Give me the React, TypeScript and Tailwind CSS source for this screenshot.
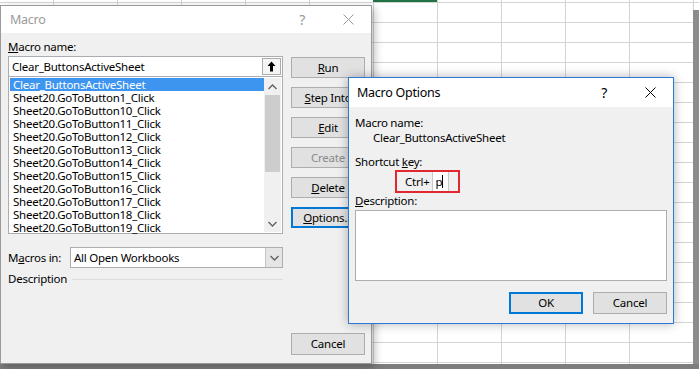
import React from 'react';

const font = { fontFamily: '"Noto Sans", "Open Sans", sans-serif' };

function CloseIcon({ color }: { color: string }) {
  return (
    <svg width="11" height="11" viewBox="0 0 11 11">
      <path d="M0.5 0.5 L10.5 10.5 M10.5 0.5 L0.5 10.5" stroke={color} strokeWidth="1" />
    </svg>
  );
}

function Chevron({ up }: { up?: boolean }) {
  return (
    <svg width="9" height="6" viewBox="0 0 9 6">
      <path d={up ? 'M0.5 5 L4.5 1 L8.5 5' : 'M0.5 1 L4.5 5 L8.5 1'} stroke="#606060" strokeWidth="1.3" fill="none" />
    </svg>
  );
}

function Btn({ children, focus, disabled, className = '' }: { children: React.ReactNode; focus?: boolean; disabled?: boolean; className?: string }) {
  return (
    <div
      className={`flex items-center justify-center bg-[#e1e1e1] ${
        focus ? 'border-2 border-[#0078d7]' : 'border border-[#adadad]'
      } ${disabled ? 'text-[#8a8a8a]' : 'text-black'} ${className}`}
    >
      {children}
    </div>
  );
}

export default function App() {
  const macros = [
    'Clear_ButtonsActiveSheet',
    'Sheet20.GoToButton1_Click',
    'Sheet20.GoToButton10_Click',
    'Sheet20.GoToButton11_Click',
    'Sheet20.GoToButton12_Click',
    'Sheet20.GoToButton13_Click',
    'Sheet20.GoToButton14_Click',
    'Sheet20.GoToButton15_Click',
    'Sheet20.GoToButton16_Click',
    'Sheet20.GoToButton17_Click',
    'Sheet20.GoToButton18_Click',
    'Sheet20.GoToButton19_Click',
  ];

  return (
    <div
      style={font}
      className="relative w-[699px] h-[369px] overflow-hidden bg-white bg-[linear-gradient(to_right,#d4d4d4_1px,transparent_1px),linear-gradient(to_bottom,#d4d4d4_1px,transparent_1px)] bg-[size:64px_20px] bg-[position:53px_2px] text-[11.5px] tracking-[-0.25px] leading-[16px] text-black"
    >
      {/* active cell edge */}
      <div className="absolute left-[373px] top-0 w-[64px] h-[2px] bg-[#217346]" />

      {/* screen frame */}
      <div className="absolute right-0 top-[10px] w-[6px] h-[359px] bg-[#8c8c8c]" />
      <div className="absolute left-0 bottom-0 w-[699px] h-[5px] bg-[#7d7d7d]" />

      {/* Macro dialog */}
      <div className="absolute left-0 top-[5px] w-[372px] h-[359px] bg-[#f0f0f0] border border-[#9a9a9a] shadow-[3px_3px_8px_rgba(0,0,0,0.25)]">
        <div className="h-[27px] bg-white flex items-center pl-[9px] pr-[17px] text-[#9a9a9a] text-[12.5px]">
          <span>Macro</span>
          <span className="ml-auto mr-[38px] text-[14px]">?</span>
          <CloseIcon color="#9a9a9a" />
        </div>

        <div className="flex items-start pl-[7px] pt-[6px]">
          {/* left column */}
          <div className="w-[275px]">
            <div>
              <u>M</u>acro name:
            </div>
            <div className="mt-[1px] h-[21px] bg-white border border-[#abadb3] flex items-center pl-[3px] pr-[1px]">
              <span>Clear_ButtonsActiveSheet</span>
              <div className="ml-auto w-[19px] h-[17px] border border-[#adadad] bg-[#f5f5f5] flex items-center justify-center">
                <svg width="9" height="11" viewBox="0 0 9 11">
                  <path d="M4.5 0.5 L8.5 5 L6 5 L6 10.5 L3 10.5 L3 5 L0.5 5 Z" fill="#000" />
                </svg>
              </div>
            </div>
            <div className="h-[157px] bg-white border border-[#abadb3] border-t-0 flex p-[1px]">
              <div className="flex-1">
                {macros.map((m, i) => (
                  <div
                    key={m}
                    className={`h-[13px] leading-[13px] pl-[3px] whitespace-nowrap ${
                      i === 0 ? 'bg-[#3d95ef] text-white' : ''
                    }`}
                  >
                    {m}
                  </div>
                ))}
              </div>
              <div className="w-[17px] bg-[#f0f0f0] flex flex-col items-center">
                <div className="h-[17px] flex items-center justify-center">
                  <Chevron up />
                </div>
                <div className="w-[15px] h-[77px] bg-[#cdcdcd]" />
                <div className="mt-auto h-[17px] flex items-center justify-center">
                  <Chevron />
                </div>
              </div>
            </div>

            <div className="mt-[13px] flex items-center">
              <span className="w-[62px]">
                M<u>a</u>cros in:
              </span>
              <div className="flex-1 h-[21px] bg-white border border-[#abadb3] flex items-center pl-[3px]">
                <span>All Open Workbooks</span>
                <div className="ml-auto w-[17px] h-[19px] bg-[#e5e5e5] border-l border-[#c4c4c4] flex items-center justify-center">
                  <Chevron />
                </div>
              </div>
            </div>

            <div className="mt-[3px] flex items-center">
              <span>Description</span>
              <div className="flex-1 ml-[5px] h-px bg-[#dcdcdc]" />
            </div>
          </div>

          {/* right column */}
          <div className="ml-[8px] mt-[18px] w-[74px] flex flex-col gap-[9px]">
            <Btn className="h-[21px]">
              <span>
                <u>R</u>un
              </span>
            </Btn>
            <Btn className="h-[21px]">
              <span className="whitespace-nowrap">
                <u>S</u>tep Into
              </span>
            </Btn>
            <Btn className="h-[21px]">
              <span>
                <u>E</u>dit
              </span>
            </Btn>
            <Btn className="h-[21px]" disabled>
              <span>Create</span>
            </Btn>
            <Btn className="h-[21px]">
              <span>
                <u>D</u>elete
              </span>
            </Btn>
            <Btn className="h-[21px]" focus>
              <span>
                <u>O</u>ptions...
              </span>
            </Btn>
            <Btn className="h-[22px] mt-[96px]">
              <span>Cancel</span>
            </Btn>
          </div>
        </div>
      </div>

      {/* Macro Options dialog */}
      <div className="absolute left-[348px] top-[77px] w-[326px] h-[247px] bg-[#f0f0f0] border border-[#2b79d7] shadow-[0_0_10px_rgba(0,0,0,0.3)]">
        <div className="h-[29px] bg-white flex items-center pl-[8px] pr-[17px] text-[12.5px]">
          <span>Macro Options</span>
          <span className="ml-auto mr-[38px] text-[14px]">?</span>
          <CloseIcon color="#000" />
        </div>

        <div className="pl-[6px] pr-[6px] pt-[8px]">
          <div>Macro name:</div>
          <div className="pl-[18px] mt-[-1px]">Clear_ButtonsActiveSheet</div>
          <div className="mt-[8px]">
            Shortcut <u>k</u>ey:
          </div>
          <div className="ml-[40px] w-[65px] h-[23px] border-2 border-[#e0282e] flex items-center pl-[8px]">
            <span>Ctrl+</span>
            <div className="ml-[3px] w-[17px] h-[19px] bg-white border-l border-r border-[#c8c8c8] flex items-center pl-[2px]">
              <span>p</span>
              <span className="w-px h-[13px] bg-black" />
            </div>
          </div>
          <div>
            <u>D</u>escription:
          </div>
          <div className="mt-px h-[71px] bg-white border border-[#abadb3]" />
          <div className="mt-[11px] flex justify-end gap-[10px]">
            <Btn className="w-[74px] h-[22px]" focus>
              <span>OK</span>
            </Btn>
            <Btn className="w-[74px] h-[22px]">
              <span>Cancel</span>
            </Btn>
          </div>
        </div>
      </div>
    </div>
  );
}
